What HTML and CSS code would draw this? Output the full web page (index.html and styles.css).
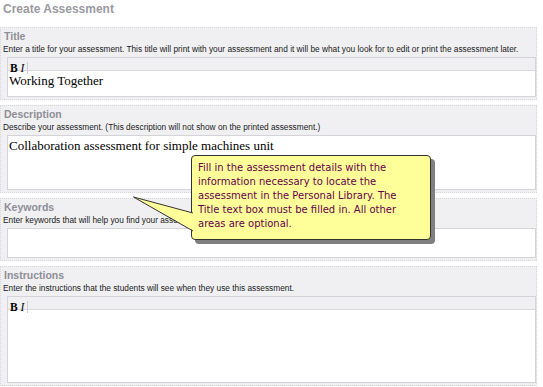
FILE: index.html
```html
<!DOCTYPE html>
<html lang="en">
  <head>
    <meta charset="UTF-8" />
    <title>Create Assessment</title>
    <link rel="stylesheet" href="styles.css">
  </head>
  <body>
    <div class="page">
      <h1>Create Assessment</h1>

      <div class="section">
        <h3>Title</h3>
        <p class="hint">Enter a title for your assessment. This title will print with your assessment and it will be what you look for to edit or print the assessment later.</p>
        <div class="editor">
          <div class="toolbar"><span class="tool"><b>B</b> <i>I</i></span></div>
          <div class="area area-title">Working Together</div>
        </div>
      </div>

      <div class="section">
        <h3>Description</h3>
        <p class="hint">Describe your assessment. (This description will not show on the printed assessment.)</p>
        <div class="editor">
          <div class="area area-desc">Collaboration assessment for simple machines unit</div>
        </div>
      </div>

      <div class="section">
        <h3>Keywords</h3>
        <p class="hint">Enter keywords that will help you find your assessment.</p>
        <div class="editor">
          <div class="area area-keys"></div>
        </div>
      </div>

      <div class="section last">
        <h3>Instructions</h3>
        <p class="hint">Enter the instructions that the students will see when they use this assessment.</p>
        <div class="editor">
          <div class="toolbar"><span class="tool"><b>B</b> <i>I</i></span></div>
          <div class="area area-instr"></div>
        </div>
      </div>

      <div class="callout">
        <svg class="pointer" width="62" height="40" viewBox="0 0 62 40">
          <polygon points="61,17 0.5,1 61,35" fill="#ffff99"/>
          <polyline points="60,17 0.5,1 60,35" fill="none" stroke="#333" stroke-width="1"/>
        </svg>
        Fill in the assessment details with the<br>
        information necessary to locate the<br>
        assessment in the Personal Library. The<br>
        Title text box must be filled in. All other<br>
        areas are optional.
      </div>
    </div>
  </body>
</html>
```

FILE: styles.css
```css
body {
  margin: 0;
  background: #fff;
  font-family: 'Liberation Sans', Arial, sans-serif;
}
.page {
  position: relative;
  width: 543px;
  height: 387px;
  overflow: hidden;
}
h1 {
  margin: 0;
  padding: 2px 0 0 3px;
  height: 25px;
  font-size: 12px;
  font-weight: bold;
  color: #9a9aa0;
}
.section {
  width: 533px;
  margin-bottom: 5px;
  padding: 2px 0 2px 2px;
  background: #f0f0f2;
  border: 1px dotted #d6d6da;
}
.section.last {
  margin-bottom: 0;
}
h3 {
  margin: 0;
  padding-left: 1px;
  font-size: 10.5px;
  line-height: 13px;
  font-weight: bold;
  color: #8e8e96;
}
.hint {
  margin: 1px 0 3px 0;
  font-size: 8.3px;
  line-height: 10px;
  color: #1a1a1a;
  white-space: nowrap;
}
.editor {
  margin-left: 4px;
  border: 1px solid #d4d4d8;
  background: #fff;
}
.toolbar {
  height: 12px;
  background: #f0f0f2;
  border-bottom: 1px solid #d8d8dc;
}
.tool {
  display: inline-block;
  height: 12px;
  padding: 0 3px 0 2px;
  font-family: 'Liberation Serif', 'Times New Roman', serif;
  font-size: 11.5px;
  line-height: 12px;
  color: #000;
  border-right: 1px solid #d0d0d4;
}
.area {
  padding: 2px 0 0 1px;
  font-family: 'Liberation Serif', 'Times New Roman', serif;
  font-size: 13px;
  line-height: 16px;
  color: #000;
}
.area-title {
  height: 23px;
}
.area-desc {
  height: 51px;
}
.area-keys {
  height: 26px;
}
.area-instr {
  height: 70px;
}
.callout {
  position: absolute;
  left: 191px;
  top: 155px;
  width: 227px;
  height: 78px;
  padding: 5px 5px 0 6px;
  background: #ffff99;
  border: 1px solid #333;
  border-radius: 4px;
  box-shadow: 4px 4px 0 #808080;
  font-family: 'DejaVu Sans', Verdana, sans-serif;
  font-size: 10px;
  line-height: 14px;
  color: #66004d;
  white-space: nowrap;
}
.pointer {
  position: absolute;
  left: -59px;
  top: 40px;
}
```
